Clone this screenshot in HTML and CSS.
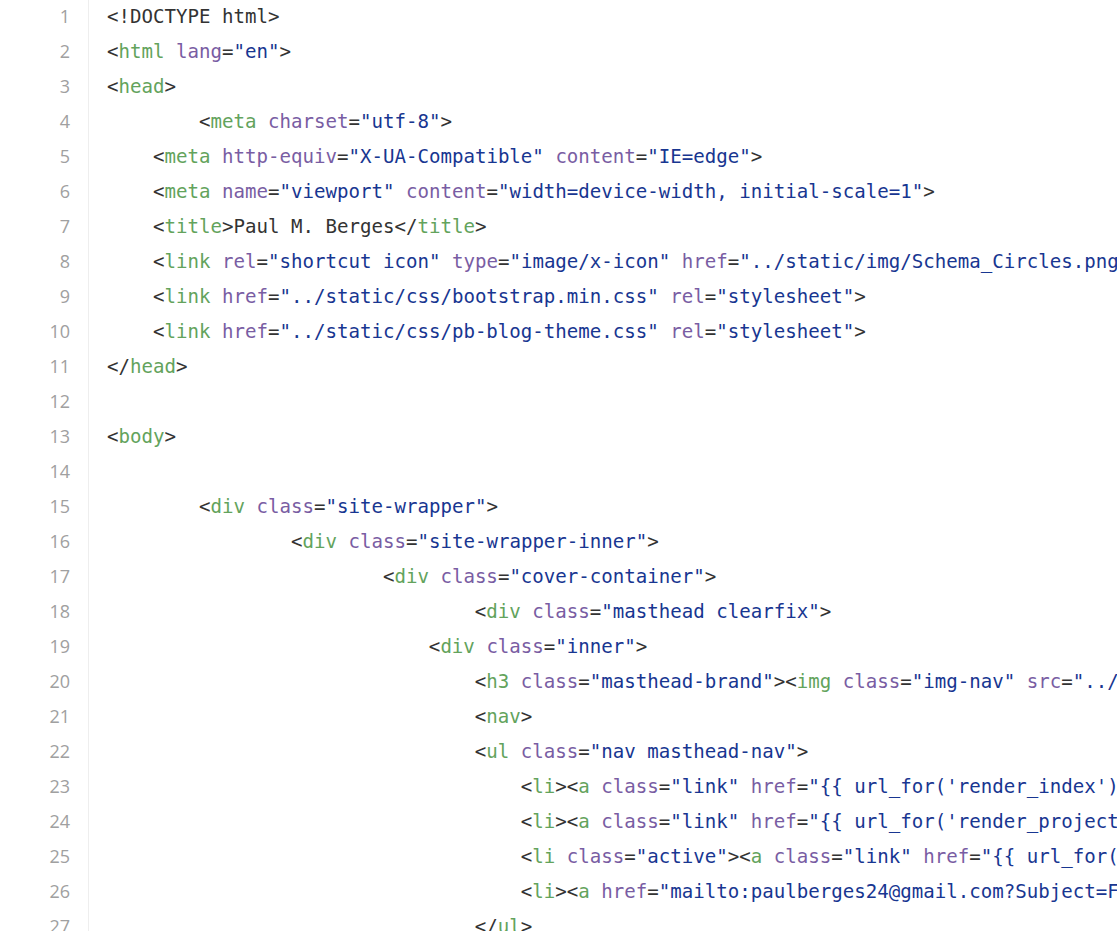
FILE: index.html
```html
<!DOCTYPE html>
<html lang="en">
<head>
<meta charset="utf-8">
<title>Source</title>
<link rel="stylesheet" href="styles.css">
</head>
<body>
<div class="viewer">
<div class="gutter">
<div class="ln">1</div><div class="ln">2</div><div class="ln">3</div><div class="ln">4</div><div class="ln">5</div><div class="ln">6</div><div class="ln">7</div><div class="ln">8</div><div class="ln">9</div><div class="ln">10</div><div class="ln">11</div><div class="ln">12</div><div class="ln">13</div><div class="ln">14</div><div class="ln">15</div><div class="ln">16</div><div class="ln">17</div><div class="ln">18</div><div class="ln">19</div><div class="ln">20</div><div class="ln">21</div><div class="ln">22</div><div class="ln">23</div><div class="ln">24</div><div class="ln">25</div><div class="ln">26</div><div class="ln">27</div>
</div>
<div class="code">
<div class="line">&lt;!DOCTYPE html&gt;</div>
<div class="line">&lt;<span class="t">html</span> <span class="a">lang</span>=<span class="s">"en"</span>&gt;</div>
<div class="line">&lt;<span class="t">head</span>&gt;</div>
<div class="line">        &lt;<span class="t">meta</span> <span class="a">charset</span>=<span class="s">"utf-8"</span>&gt;</div>
<div class="line">    &lt;<span class="t">meta</span> <span class="a">http-equiv</span>=<span class="s">"X-UA-Compatible"</span> <span class="a">content</span>=<span class="s">"IE=edge"</span>&gt;</div>
<div class="line">    &lt;<span class="t">meta</span> <span class="a">name</span>=<span class="s">"viewport"</span> <span class="a">content</span>=<span class="s">"width=device-width, initial-scale=1"</span>&gt;</div>
<div class="line">    &lt;<span class="t">title</span>&gt;Paul M. Berges&lt;/<span class="t">title</span>&gt;</div>
<div class="line">    &lt;<span class="t">link</span> <span class="a">rel</span>=<span class="s">"shortcut icon"</span> <span class="a">type</span>=<span class="s">"image/x-icon"</span> <span class="a">href</span>=<span class="s">"../static/img/Schema_Circles.png"</span>&gt;</div>
<div class="line">    &lt;<span class="t">link</span> <span class="a">href</span>=<span class="s">"../static/css/bootstrap.min.css"</span> <span class="a">rel</span>=<span class="s">"stylesheet"</span>&gt;</div>
<div class="line">    &lt;<span class="t">link</span> <span class="a">href</span>=<span class="s">"../static/css/pb-blog-theme.css"</span> <span class="a">rel</span>=<span class="s">"stylesheet"</span>&gt;</div>
<div class="line">&lt;/<span class="t">head</span>&gt;</div>
<div class="line"> </div>
<div class="line">&lt;<span class="t">body</span>&gt;</div>
<div class="line"> </div>
<div class="line">        &lt;<span class="t">div</span> <span class="a">class</span>=<span class="s">"site-wrapper"</span>&gt;</div>
<div class="line">                &lt;<span class="t">div</span> <span class="a">class</span>=<span class="s">"site-wrapper-inner"</span>&gt;</div>
<div class="line">                        &lt;<span class="t">div</span> <span class="a">class</span>=<span class="s">"cover-container"</span>&gt;</div>
<div class="line">                                &lt;<span class="t">div</span> <span class="a">class</span>=<span class="s">"masthead clearfix"</span>&gt;</div>
<div class="line">                            &lt;<span class="t">div</span> <span class="a">class</span>=<span class="s">"inner"</span>&gt;</div>
<div class="line">                                &lt;<span class="t">h3</span> <span class="a">class</span>=<span class="s">"masthead-brand"</span>&gt;&lt;<span class="t">img</span> <span class="a">class</span>=<span class="s">"img-nav"</span> <span class="a">src</span>=<span class="s">"../static/img/Schema_Circles.png"</span>&gt;&lt;/<span class="t">h3</span>&gt;</div>
<div class="line">                                &lt;<span class="t">nav</span>&gt;</div>
<div class="line">                                &lt;<span class="t">ul</span> <span class="a">class</span>=<span class="s">"nav masthead-nav"</span>&gt;</div>
<div class="line">                                    &lt;<span class="t">li</span>&gt;&lt;<span class="t">a</span> <span class="a">class</span>=<span class="s">"link"</span> <span class="a">href</span>=<span class="s">"{{ url_for('render_index') }}"</span>&gt;Home&lt;/<span class="t">a</span>&gt;&lt;/<span class="t">li</span>&gt;</div>
<div class="line">                                    &lt;<span class="t">li</span>&gt;&lt;<span class="t">a</span> <span class="a">class</span>=<span class="s">"link"</span> <span class="a">href</span>=<span class="s">"{{ url_for('render_projects') }}"</span>&gt;Projects&lt;/<span class="t">a</span>&gt;&lt;/<span class="t">li</span>&gt;</div>
<div class="line">                                    &lt;<span class="t">li</span> <span class="a">class</span>=<span class="s">"active"</span>&gt;&lt;<span class="t">a</span> <span class="a">class</span>=<span class="s">"link"</span> <span class="a">href</span>=<span class="s">"{{ url_for('render_blog') }}"</span>&gt;Blog&lt;/<span class="t">a</span>&gt;&lt;/<span class="t">li</span>&gt;</div>
<div class="line">                                    &lt;<span class="t">li</span>&gt;&lt;<span class="t">a</span> <span class="a">href</span>=<span class="s">"mailto:paulberges24@gmail.com?Subject=From%20Site"</span>&gt;Contact&lt;/<span class="t">a</span>&gt;&lt;/<span class="t">li</span>&gt;</div>
<div class="line">                                &lt;/<span class="t">ul</span>&gt;</div>
</div>
</div>
</body>
</html>
```
FILE: styles.css
```css
html, body {
  margin: 0;
  padding: 0;
  background: #ffffff;
  overflow: hidden;
}
.viewer {
  display: flex;
  height: 931px;
  overflow: hidden;
}
.gutter {
  flex: 0 0 70px;
  padding-right: 18px;
  border-right: 1px solid #eeeeee;
  font-family: "Open Sans", "Noto Sans", sans-serif;
  font-size: 18px;
  color: #a0a0a0;
  text-align: right;
}
.ln {
  height: 35px;
  line-height: 33px;
}
.code {
  flex: 1 1 auto;
  min-width: 0;
  padding-left: 18px;
  font-family: "DejaVu Sans Mono", "Liberation Mono", monospace;
  font-size: 19.1px;
  color: #333333;
  overflow: hidden;
}
.line {
  height: 35px;
  line-height: 33px;
  white-space: pre;
}
.t { color: #63a35c; }
.a { color: #795da3; }
.s { color: #183691; }
```
